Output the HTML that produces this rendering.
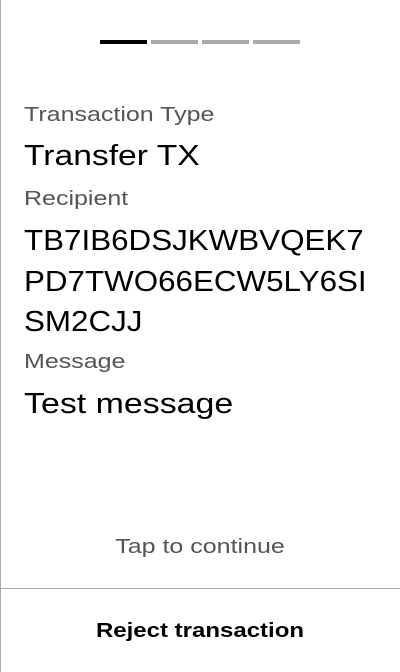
<!DOCTYPE html>
<html><head><meta charset="utf-8"><style>
body{margin:0;width:400px;height:672px;background:#fff;position:relative;overflow:hidden;font-family:"Liberation Sans",sans-serif}
.lb{position:absolute;left:0;top:0;width:1px;height:672px;background:#aaa}
.bar{position:absolute;top:40px;height:4px;width:47px;background:#aaa}
.t{position:absolute;left:24px;white-space:nowrap;transform-origin:left top}
.l{font-size:20px;color:#555;line-height:24px;transform:scaleX(1.25)}
.v{font-size:28.5px;color:#000;line-height:40.5px}
.c{position:absolute;left:0;width:400px;text-align:center;font-size:20px;line-height:24px;transform-origin:center top}
</style></head><body>
<div class="lb"></div>
<div class="bar" style="left:100px;background:#000"></div>
<div class="bar" style="left:151px"></div>
<div class="bar" style="left:202px"></div>
<div class="bar" style="left:253px"></div>
<div class="t l" style="top:103px">Transaction Type</div>
<div class="t v" style="top:136px;transform:scaleX(1.18)">Transfer TX</div>
<div class="t l" style="top:187px">Recipient</div>
<div class="t v" style="top:221px;transform:scaleX(1.1)">TB7IB6DSJKWBVQEK7<br>PD7TWO66ECW5LY6SI<br>SM2CJJ</div>
<div class="t l" style="top:350px">Message</div>
<div class="t v" style="top:384px;transform:scaleX(1.19)">Test message</div>
<div class="c" style="top:535px;color:#555;transform:scaleX(1.25)">Tap to continue</div>
<div style="position:absolute;left:0;width:400px;top:588px;height:1px;background:#aaa"></div>
<div class="c" style="top:619px;font-weight:bold;color:#000;transform:scaleX(1.2)">Reject transaction</div>
</body></html>
